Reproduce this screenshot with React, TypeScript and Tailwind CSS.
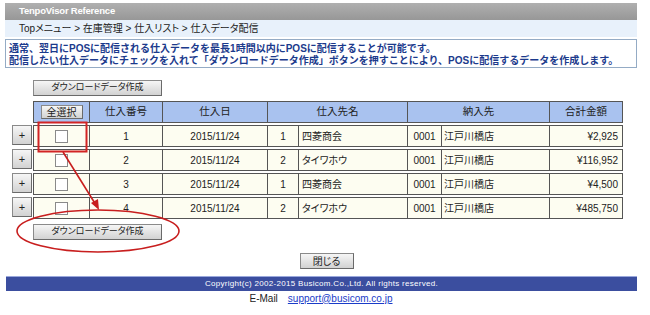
import React from "react";

const rows = [
  { no: "1", date: "2015/11/24", sc: "1", sn: "四菱商会", dc: "0001", dn: "江戸川橋店", total: "¥2,925" },
  { no: "2", date: "2015/11/24", sc: "2", sn: "タイワホウ", dc: "0001", dn: "江戸川橋店", total: "¥116,952" },
  { no: "3", date: "2015/11/24", sc: "1", sn: "四菱商会", dc: "0001", dn: "江戸川橋店", total: "¥4,500" },
  { no: "4", date: "2015/11/24", sc: "2", sn: "タイワホウ", dc: "0001", dn: "江戸川橋店", total: "¥485,750" },
];

const btn =
  "flex items-center justify-center border border-[#8a8a8a] border-r-[#6a6a6a] border-b-[#6a6a6a] bg-gradient-to-b from-[#f6f6f6] to-[#d2d2d2] text-[#222]";

const cell = "flex items-center h-full border-y border-l border-[#555]";

export default function App() {
  return (
    <div
      className="relative w-[650px] h-[315px] bg-white text-[#222] overflow-hidden [font-feature-settings:'palt']"
      style={{ fontFamily: '"Liberation Sans", "Noto Sans CJK JP", sans-serif' }}
    >
      <div className="pt-[3px] px-[5px] w-[642px]">
        {/* title bar */}
        <div className="h-[17px] bg-gradient-to-b from-[#b0b0b0] to-[#979797] flex items-center pl-[14px] text-white font-bold text-[9.5px] tracking-[-0.2px]">
          TenpoVisor Reference
        </div>
        {/* breadcrumb */}
        <div className="h-[17px] bg-[#e8f1fb] flex items-center pl-[14px] text-[10px] text-[#222]">
          Topメニュー &gt; 在庫管理 &gt; 仕入リスト &gt; 仕入データ配信
        </div>
        {/* info */}
        <div className="mt-[2px] h-[29px] border border-[#94abc5] bg-white pl-[3px] pt-[3px] text-[10px] leading-[12px] font-bold text-[#1b3a8c] [font-feature-settings:normal]">
          <div>通常、翌日にPOSに配信される仕入データを最長1時間以内にPOSに配信することが可能です。</div>
          <div>配信したい仕入データにチェックを入れて「ダウンロードデータ作成」ボタンを押すことにより、POSに配信するデータを作成します。</div>
        </div>

        {/* top button */}
        <div className="mt-[12px] pl-[28px]">
          <div className={`${btn} w-[129px] h-[16px] text-[9px]`}>ダウンロードデータ作成</div>
        </div>

        {/* table */}
        <div className="mt-[5px] flex flex-col gap-[2px]">
          {/* header */}
          <div className="flex h-[22px]">
            <div className="w-[28px]" />
            <div className="flex h-full bg-[#a9c2ef] text-[10.5px] text-[#222]">
              <div className={`${cell} w-[56px] justify-center`}>
                <div className={`${btn} w-[42px] h-[14px] text-[10px]`}>全選択</div>
              </div>
              <div className={`${cell} w-[73px] justify-center`}>仕入番号</div>
              <div className={`${cell} w-[105px] justify-center`}>仕入日</div>
              <div className={`${cell} w-[140px] justify-center`}>仕入先名</div>
              <div className={`${cell} w-[142px] justify-center`}>納入先</div>
              <div className={`${cell} w-[74px] justify-center border-r`}>合計金額</div>
            </div>
          </div>
          {rows.map((r) => (
            <div key={r.no} className="flex h-[22px]">
              <div className="w-[28px] flex items-start justify-end pr-[1px]">
                <div className={`${btn} w-[20px] h-[20px] text-[11px]`}>+</div>
              </div>
              <div className="flex h-full bg-[#fdfdf1] text-[10px] text-[#222]">
                <div className={`${cell} w-[56px] justify-center`}>
                  <div className="w-[13px] h-[13px] border border-[#8a8a8a] bg-white" />
                </div>
                <div className={`${cell} w-[73px] justify-center`}>{r.no}</div>
                <div className={`${cell} w-[105px] justify-center`}>{r.date}</div>
                <div className={`${cell} w-[31px] justify-center`}>{r.sc}</div>
                <div className={`${cell} w-[109px] pl-[3px]`}>{r.sn}</div>
                <div className={`${cell} w-[34px] justify-center`}>{r.dc}</div>
                <div className={`${cell} w-[108px] pl-[2px]`}>{r.dn}</div>
                <div className={`${cell} w-[74px] justify-end pr-[4px] border-r`}>{r.total}</div>
              </div>
            </div>
          ))}
        </div>

        {/* bottom button */}
        <div className="mt-[5px] pl-[28px]">
          <div className={`${btn} w-[129px] h-[16px] text-[9px]`}>ダウンロードデータ作成</div>
        </div>

        {/* close */}
        <div className="mt-[13px] flex justify-center pl-[11px]">
          <div className={`${btn} w-[54px] h-[16px] text-[10px]`}>閉じる</div>
        </div>

        {/* footer */}
        <div className="mt-[7px] ml-[1px] h-[15px] bg-[#3b4e9f] border-t border-[#9aa8dc] flex items-center justify-center text-white text-[8px] tracking-[0.3px]">
          Copyright(c) 2002-2015 Busicom.Co.,Ltd. All rights reserved.
        </div>
        <div className="mt-[1px] flex justify-center items-center gap-[10px] text-[10px] h-[12px]">
          <span className="text-[#222]">E-Mail</span>
          <span className="text-[#1a3cc8] underline">support@busicom.co.jp</span>
        </div>
      </div>

      {/* annotations overlay */}
      <svg className="absolute left-0 top-0 pointer-events-none" width="650" height="315" viewBox="0 0 650 315">
        <rect x="38.5" y="122.5" width="48" height="29" fill="none" stroke="#d22424" strokeWidth="2" />
        <line x1="63" y1="152" x2="96" y2="205" stroke="#c81e1e" strokeWidth="1.6" />
        <polygon points="99,210 91,203 98,199" fill="#c81e1e" />
        <ellipse cx="98" cy="231" rx="81" ry="21" fill="none" stroke="#c81e1e" strokeWidth="1.6" />
      </svg>
    </div>
  );
}
